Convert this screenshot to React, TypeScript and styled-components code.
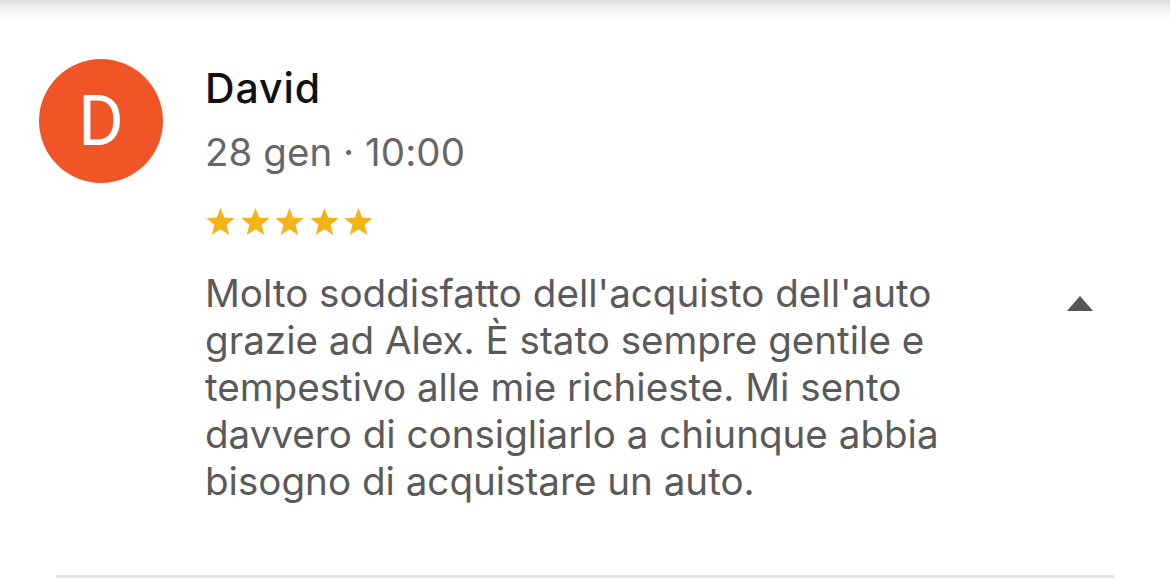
import React from "react";
import styled, { createGlobalStyle } from "styled-components";

const Global = createGlobalStyle`
  html, body { margin: 0; padding: 0; background: #ffffff; }
  body { font-family: Inter, "Noto Sans", sans-serif; -webkit-font-smoothing: antialiased; }
`;

const Page = styled.div`
  width: 1170px;
  height: 582px;
  background: #fff;
  display: flex;
  flex-direction: column;
  overflow: hidden;
`;

const TopShade = styled.div`
  height: 22px;
  flex: none;
  background: linear-gradient(to bottom, #dcdcdc 0%, #efefef 30%, #f9f9f9 65%, #ffffff 100%);
`;

const Review = styled.div`
  display: flex;
  align-items: flex-start;
  padding: 37px 0 0 39px;
  flex: 1;
`;

const Avatar = styled.div`
  width: 124px;
  height: 124px;
  border-radius: 50%;
  background: #ef5527;
  color: #fff;
  display: flex;
  align-items: center;
  justify-content: center;
  font-family: Roboto, "Noto Sans", sans-serif;
  font-size: 70px;
  font-weight: 400;
  flex: none;
`;

const Body = styled.div`
  display: flex;
  flex-direction: column;
  margin-left: 42px;
  flex: 1;
`;

const Name = styled.div`
  font-size: 41px;
  font-weight: 500;
  color: #111;
  line-height: 48px;
  margin-top: 5px;
  letter-spacing: 0.9px;
`;

const Meta = styled.div`
  font-size: 38.4px;
  color: #666;
  line-height: 48px;
  margin-top: 16px;
  letter-spacing: 0.1px;
`;

const Stars = styled.div`
  display: flex;
  gap: 3.5px;
  margin-top: 31px;
`;

const TextRow = styled.div`
  display: flex;
  align-items: flex-start;
  margin-top: 33px;
`;

const Text = styled.p`
  margin: 0;
  font-size: 38.6px;
  line-height: 47px;
  color: #5a5a5a;
  width: 760px;
`;

const Toggle = styled.div`
  margin-left: 102px;
  margin-top: 26px;
  width: 0;
  height: 0;
  border-left: 13px solid transparent;
  border-right: 13px solid transparent;
  border-bottom: 15px solid #555;
`;

const Divider = styled.div`
  height: 3px;
  background: #e2e2e2;
  margin: 0 56px 4px 56px;
  flex: none;
`;

const Star = () => (
  <svg width="31" height="30" viewBox="0 0 24 23">
    <path
      d="M12 0.6 L14.9 8.1 L22.9 8.5 L16.7 13.6 L18.8 21.5 L12 17.1 L5.2 21.5 L7.3 13.6 L1.1 8.5 L9.1 8.1 Z"
      fill="#f3b416"
    />
  </svg>
);

export default function App() {
  return (
    <Page>
      <Global />
      <TopShade />
      <Review>
        <Avatar>D</Avatar>
        <Body>
          <Name>David</Name>
          <Meta>28 gen · 10:00</Meta>
          <Stars>
            <Star />
            <Star />
            <Star />
            <Star />
            <Star />
          </Stars>
          <TextRow>
            <Text>
              Molto soddisfatto dell'acquisto dell'auto grazie ad Alex. È stato sempre gentile e tempestivo alle mie
              richieste. Mi sento davvero di consigliarlo a chiunque abbia bisogno di acquistare un auto.
            </Text>
            <Toggle />
          </TextRow>
        </Body>
      </Review>
      <Divider />
    </Page>
  );
}
